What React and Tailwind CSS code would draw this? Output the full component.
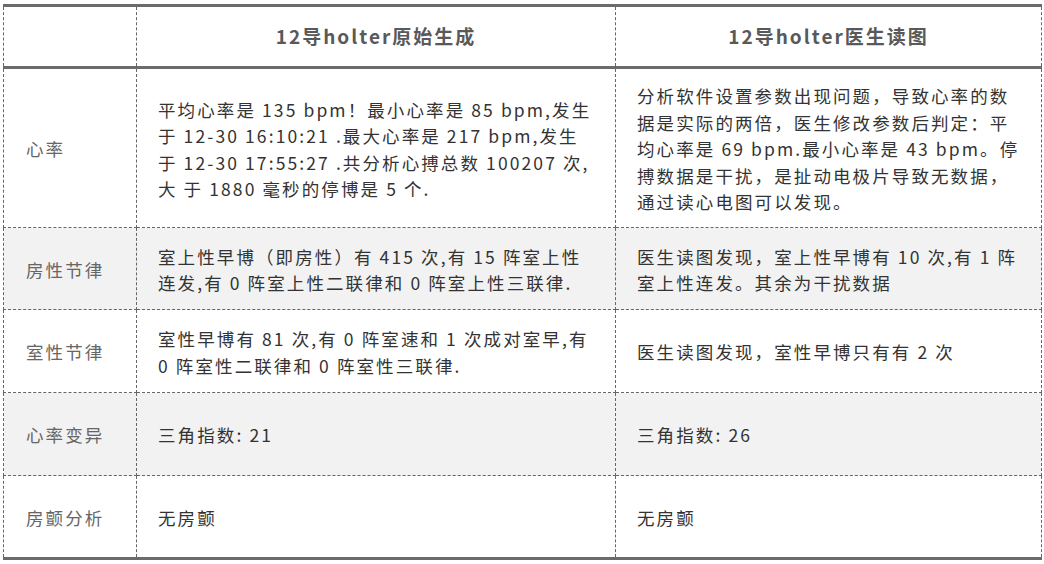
import React from 'react';

const rows = [
  {
    label: '心率',
    h: 'h-[160px]',
    bg: 'bg-white',
    a: [
      '平均心率是 135 bpm！最小心率是 85 bpm,发生',
      '于 12-30 16:10:21 .最大心率是 217 bpm,发生',
      '于 12-30 17:55:27 .共分析心搏总数 100207 次,',
      '大 于 1880 毫秒的停博是 5 个.',
    ],
    b: [
      '分析软件设置参数出现问题，导致心率的数',
      '据是实际的两倍，医生修改参数后判定：平',
      '均心率是 69 bpm.最小心率是 43 bpm。停',
      '搏数据是干扰，是扯动电极片导致无数据，',
      '通过读心电图可以发现。',
    ],
  },
  {
    label: '房性节律',
    h: 'h-[82px]',
    bg: 'bg-[#f2f2f2]',
    a: ['室上性早博（即房性）有 415 次,有 15 阵室上性', '连发,有 0 阵室上性二联律和 0 阵室上性三联律.'],
    b: ['医生读图发现，室上性早博有 10 次,有 1 阵', '室上性连发。其余为干扰数据'],
  },
  {
    label: '室性节律',
    h: 'h-[83px]',
    bg: 'bg-white',
    a: ['室性早博有 81 次,有 0 阵室速和 1 次成对室早,有', '0 阵室性二联律和 0 阵室性三联律.'],
    b: ['医生读图发现，室性早博只有有 2 次'],
  },
  {
    label: '心率变异',
    h: 'h-[83px]',
    bg: 'bg-[#f2f2f2]',
    a: ['三角指数: 21'],
    b: ['三角指数: 26'],
  },
  {
    label: '房颤分析',
    h: 'h-[83px]',
    bg: 'bg-white',
    a: ['无房颤'],
    b: ['无房颤'],
  },
];

const Lines = ({ lines }) => (
  <>
    {lines.map((l, i) => (
      <span key={i} className="block whitespace-nowrap">
        {l}
      </span>
    ))}
  </>
);

export default function App() {
  const cell = 'border border-dashed border-[#666] align-middle';
  const head = `${cell} border-t-[3px] border-b-[3px] border-t-[#6b6b6b] border-b-[#6b6b6b] text-center font-bold text-[19px] tracking-[2px] text-[#595959]`;
  const solidTB = { borderTopStyle: 'solid', borderBottomStyle: 'solid' };
  return (
    <div className="w-[1044px] h-[564px] bg-white pt-[4px] pl-[3px] font-['Noto_Sans_CJK_SC','Microsoft_YaHei',sans-serif] text-[17.5px] tracking-[2.1px] leading-[26.5px] text-[#333]">
      <table className="table-fixed border-collapse w-[1038px]">
        <colgroup>
          <col className="w-[133px]" />
          <col className="w-[479px]" />
          <col className="w-[426px]" />
        </colgroup>
        <thead>
          <tr className="h-[62px]">
            <th className={head} style={solidTB}></th>
            <th className={head} style={solidTB}>
              12导holter原始生成
            </th>
            <th className={head} style={solidTB}>
              12导holter医生读图
            </th>
          </tr>
        </thead>
        <tbody>
          {rows.map((r, i) => {
            const last = i === rows.length - 1;
            const bottom = last ? 'border-b-[3px] border-b-[#6b6b6b]' : '';
            const st = last ? { borderBottomStyle: 'solid' } : undefined;
            return (
              <tr key={r.label} className={`${r.h} ${r.bg}`}>
                <td className={`${cell} ${bottom} pl-[22px] pt-[3px] text-[#666]`} style={st}>
                  {r.label}
                </td>
                <td className={`${cell} ${bottom} pl-[21px] pr-[6px] pt-[3px]`} style={st}>
                  <Lines lines={r.a} />
                </td>
                <td className={`${cell} ${bottom} pl-[21px] pr-[6px] pt-[3px]`} style={st}>
                  <Lines lines={r.b} />
                </td>
              </tr>
            );
          })}
        </tbody>
      </table>
    </div>
  );
}
